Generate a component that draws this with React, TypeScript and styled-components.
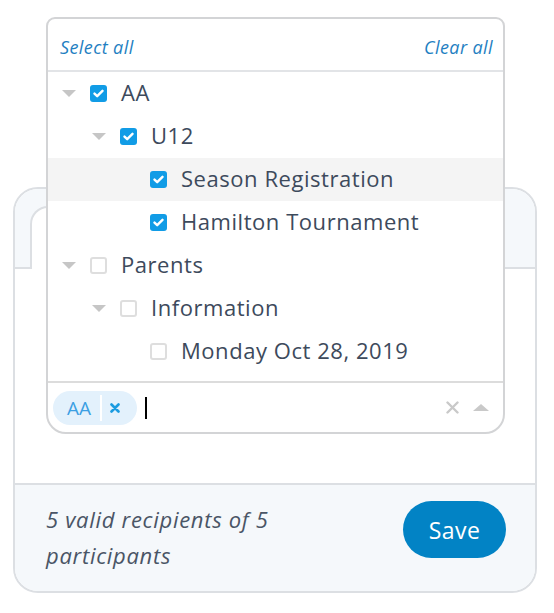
import styled, { createGlobalStyle } from "styled-components";

const GlobalStyle = createGlobalStyle`
  html, body {
    margin: 0;
    padding: 0;
    background: #ffffff;
  }
  body {
    font-family: "Open Sans", "Noto Sans", sans-serif;
    color: #3d4a5c;
  }
`;

const Page = styled.div`
  position: relative;
  width: 554px;
  height: 613px;
  padding: 187px 0 0 13px;
  box-sizing: border-box;
`;

const Card = styled.div`
  width: 524px;
  height: 406px;
  box-sizing: border-box;
  border: 2px solid #dcdfe3;
  border-radius: 25px;
  overflow: hidden;
  display: flex;
  flex-direction: column;
`;

const Header = styled.div`
  height: 80px;
  box-sizing: border-box;
  background: #f5f8fb;
  border-bottom: 2px solid #dcdfe3;
  display: flex;
  align-items: flex-end;
  padding-left: 15px;
`;

const Tab = styled.div`
  width: 300px;
  height: 63px;
  margin-bottom: -2px;
  box-sizing: border-box;
  background: #ffffff;
  border: 2px solid #dcdfe3;
  border-bottom: none;
  border-radius: 18px 18px 0 0;
`;

const Body = styled.div`
  flex: 1;
  background: #ffffff;
`;

const Footer = styled.div`
  height: 108px;
  box-sizing: border-box;
  background: #f5f8fb;
  border-top: 2px solid #dcdfe3;
  display: flex;
  align-items: flex-start;
  justify-content: space-between;
  padding: 16px 29px 0 31px;
`;

const Summary = styled.p`
  margin: 0;
  width: 250px;
  font-style: italic;
  font-size: 22px;
  letter-spacing: 0.7px;
  line-height: 36px;
  color: #4a5566;
`;

const SaveButton = styled.button`
  width: 103px;
  height: 57px;
  border: none;
  border-radius: 29px;
  background: #0283c5;
  color: #ffffff;
  font-family: inherit;
  font-size: 23px;
  letter-spacing: 0.4px;
  cursor: pointer;
`;

const Dropdown = styled.div`
  position: absolute;
  top: 17px;
  left: 46px;
  width: 459px;
  height: 417px;
  box-sizing: border-box;
  background: #ffffff;
  border: 2px solid #d3d4d6;
  border-radius: 9px 9px 20px 20px;
  display: flex;
  flex-direction: column;
  overflow: hidden;
`;

const Actions = styled.div`
  height: 53px;
  box-sizing: border-box;
  border-bottom: 2px solid #e2e4e7;
  display: flex;
  justify-content: space-between;
  align-items: center;
  padding: 4px 10px 0 12px;
`;

const ActionLink = styled.a`
  font-style: italic;
  font-size: 18px;
  letter-spacing: 0.4px;
  color: #1f7fc2;
  cursor: pointer;
`;

const TreeList = styled.ul`
  list-style: none;
  margin: 0;
  padding: 0 0 7px;
  flex: 1;
`;

const Row = styled.li<{ $level: number; $active?: boolean }>`
  height: 43px;
  display: flex;
  align-items: center;
  gap: 14px;
  padding-left: ${({ $level }) => 14 + $level * 30}px;
  background: ${({ $active }) => ($active ? "#f4f4f4" : "transparent")};
  font-size: 22px;
  letter-spacing: 0.55px;
  color: #3d4a5c;
`;

const Label = styled.span`
  margin-top: -4px;
`;

const Caret = styled.span<{ $hidden?: boolean }>`
  width: 0;
  height: 0;
  border-left: 7px solid transparent;
  border-right: 7px solid transparent;
  border-top: 7px solid #c6c6c6;
  visibility: ${({ $hidden }) => ($hidden ? "hidden" : "visible")};
`;

const Box = styled.span<{ $checked: boolean }>`
  width: 17px;
  height: 17px;
  box-sizing: border-box;
  border-radius: 3px;
  display: flex;
  align-items: center;
  justify-content: center;
  background: ${({ $checked }) => ($checked ? "#119ce6" : "#ffffff")};
  border: ${({ $checked }) => ($checked ? "none" : "2px solid #dedede")};
`;

const InputRow = styled.div`
  height: 51px;
  box-sizing: border-box;
  border-top: 2px solid #dcdcdc;
  display: flex;
  align-items: center;
  padding: 0 14px 0 5px;
`;

const Chip = styled.span`
  height: 34px;
  width: 84px;
  box-sizing: border-box;
  border-radius: 17px;
  background: #e3f1fc;
  display: flex;
  align-items: center;
  padding-left: 14px;
  font-size: 19px;
  color: #3b9fe3;
`;

const ChipDivider = styled.span`
  width: 2px;
  height: 26px;
  background: #ffffff;
  margin: 0 8px 0 9px;
`;

const Cursor = styled.span`
  width: 2px;
  height: 22px;
  background: #000000;
  margin-left: 8px;
`;

const Spacer = styled.span`
  flex: 1;
`;

const Controls = styled.span`
  display: flex;
  align-items: center;
  gap: 14px;
`;

const CaretUp = styled.span`
  width: 0;
  height: 0;
  border-left: 8px solid transparent;
  border-right: 8px solid transparent;
  border-bottom: 7px solid #c9c9c9;
`;

const Check = () => (
  <svg width="11" height="9" viewBox="0 0 11 9">
    <path d="M1.5 4.6 L4.2 7.2 L9.5 1.8" fill="none" stroke="#fff" strokeWidth="2.4" strokeLinecap="round" strokeLinejoin="round" />
  </svg>
);

type Node = { label: string; level: number; checked: boolean; expandable: boolean; active?: boolean };

const nodes: Node[] = [
  { label: "AA", level: 0, checked: true, expandable: true },
  { label: "U12", level: 1, checked: true, expandable: true },
  { label: "Season Registration", level: 2, checked: true, expandable: false, active: true },
  { label: "Hamilton Tournament", level: 2, checked: true, expandable: false },
  { label: "Parents", level: 0, checked: false, expandable: true },
  { label: "Information", level: 1, checked: false, expandable: true },
  { label: "Monday Oct 28, 2019", level: 2, checked: false, expandable: false },
];

export default function App() {
  return (
    <Page>
      <GlobalStyle />
      <Card>
        <Header>
          <Tab />
        </Header>
        <Body />
        <Footer>
          <Summary>5 valid recipients of 5 participants</Summary>
          <SaveButton>Save</SaveButton>
        </Footer>
      </Card>

      <Dropdown>
        <Actions>
          <ActionLink>Select all</ActionLink>
          <ActionLink>Clear all</ActionLink>
        </Actions>
        <TreeList>
          {nodes.map((n) => (
            <Row key={n.label} $level={n.level} $active={n.active}>
              <Caret $hidden={!n.expandable} />
              <Box $checked={n.checked}>{n.checked && <Check />}</Box>
              <Label>{n.label}</Label>
            </Row>
          ))}
        </TreeList>
        <InputRow>
          <Chip>
            AA
            <ChipDivider />
            <svg width="10" height="10" viewBox="0 0 10 10">
              <path d="M1.5 1.5 L8.5 8.5 M8.5 1.5 L1.5 8.5" stroke="#1a9be0" strokeWidth="2.6" strokeLinecap="round" />
            </svg>
          </Chip>
          <Cursor />
          <Spacer />
          <Controls>
            <svg width="13" height="13" viewBox="0 0 13 13">
              <path d="M1.5 1.5 L11.5 11.5 M11.5 1.5 L1.5 11.5" stroke="#c9c9c9" strokeWidth="2.4" strokeLinecap="round" />
            </svg>
            <CaretUp />
          </Controls>
        </InputRow>
      </Dropdown>
    </Page>
  );
}
